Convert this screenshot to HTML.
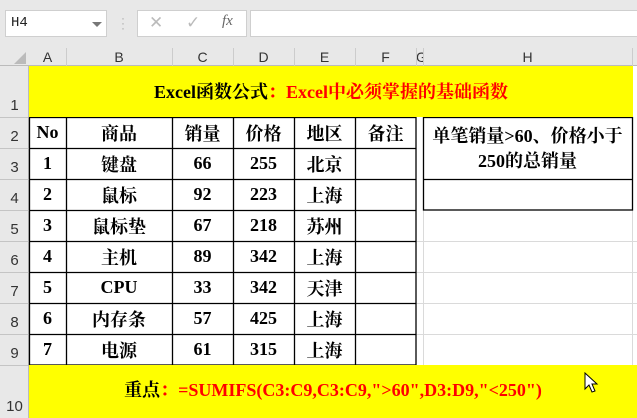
<!DOCTYPE html><html><head><meta charset="utf-8"><style>
*{margin:0;padding:0;box-sizing:border-box}
body{width:637px;height:418px;overflow:hidden;background:#fff;position:relative;font-family:"Liberation Serif","Noto Serif CJK SC",serif}
.a{position:absolute}
.hd{font-family:"Liberation Sans",sans-serif;font-size:14px;color:#333;text-align:center}
.c{position:absolute;display:flex;align-items:center;justify-content:center;font-weight:bold;font-size:18px;color:#000}
</style></head><body>
<div class="a" style="left:0;top:0;width:637px;height:66px;background:#e8e8e8"></div>
<div class="a" style="left:5px;top:10px;width:102px;height:27px;background:#fff;border:1px solid #cfcfcf"></div>
<div class="a hd" style="left:11px;top:15px;font-size:14px;font-family:'Liberation Mono',monospace;color:#222">H4</div>
<div class="a" style="left:92px;top:22px;width:0;height:0;border-left:5px solid transparent;border-right:5px solid transparent;border-top:5px solid #777"></div>
<div class="a" style="left:121px;top:16px;color:#aaa;font-size:12px;line-height:5px;font-family:'Liberation Sans'">·<br>·<br>·</div>
<div class="a" style="left:137px;top:10px;width:110px;height:27px;background:#fff;border:1px solid #cfcfcf"></div>
<div class="a" style="left:149px;top:13px;color:#bbb;font-size:17px;font-family:'DejaVu Sans'">✕</div>
<div class="a" style="left:186px;top:13px;color:#bbb;font-size:17px;font-family:'DejaVu Sans'">✓</div>
<div class="a" style="left:222px;top:13px;color:#666;font-size:15px;font-style:italic;font-family:'Liberation Serif'">fx</div>
<div class="a" style="left:250px;top:10px;width:390px;height:27px;background:#fff;border:1px solid #cfcfcf"></div>
<div class="a" style="left:0;top:48px;width:637px;height:18px;border-bottom:1px solid #bbb"></div>
<div class="a" style="left:14px;top:52px;width:0;height:0;border-left:12px solid transparent;border-bottom:12px solid #bbb"></div>
<div class="a hd" style="left:29px;top:49px;width:37px">A</div>
<div class="a hd" style="left:66px;top:49px;width:106px">B</div>
<div class="a hd" style="left:172px;top:49px;width:61px">C</div>
<div class="a hd" style="left:233px;top:49px;width:61px">D</div>
<div class="a hd" style="left:294px;top:49px;width:61px">E</div>
<div class="a hd" style="left:355px;top:49px;width:61px">F</div>
<div class="a hd" style="left:416px;top:49px;width:7px;overflow:hidden">G</div>
<div class="a hd" style="left:423px;top:49px;width:209px">H</div>
<div class="a" style="left:66px;top:48px;width:1px;height:18px;background:#ccc"></div>
<div class="a" style="left:172px;top:48px;width:1px;height:18px;background:#ccc"></div>
<div class="a" style="left:233px;top:48px;width:1px;height:18px;background:#ccc"></div>
<div class="a" style="left:294px;top:48px;width:1px;height:18px;background:#ccc"></div>
<div class="a" style="left:355px;top:48px;width:1px;height:18px;background:#ccc"></div>
<div class="a" style="left:416px;top:48px;width:1px;height:18px;background:#ccc"></div>
<div class="a" style="left:423px;top:48px;width:1px;height:18px;background:#ccc"></div>
<div class="a" style="left:632px;top:48px;width:1px;height:18px;background:#ccc"></div>
<div class="a" style="left:0;top:66px;width:29px;height:352px;background:#e8e8e8;border-right:1px solid #bbb"></div>
<div id="rh"></div>
<svg class="a" style="left:0;top:0" width="637" height="418">
<g stroke="#dadada" stroke-width="1">
<line x1="423.5" y1="210" x2="423.5" y2="365"/><line x1="632.5" y1="117" x2="632.5" y2="365"/>
<line x1="416" y1="241.5" x2="637" y2="241.5"/><line x1="416" y1="272.5" x2="637" y2="272.5"/><line x1="416" y1="303.5" x2="637" y2="303.5"/><line x1="416" y1="334.5" x2="637" y2="334.5"/>
</g>
<g stroke="#c4c4c4"><line x1="0" y1="117.5" x2="29" y2="117.5"/><line x1="0" y1="148.5" x2="29" y2="148.5"/><line x1="0" y1="179.5" x2="29" y2="179.5"/><line x1="0" y1="210.5" x2="29" y2="210.5"/><line x1="0" y1="241.5" x2="29" y2="241.5"/><line x1="0" y1="272.5" x2="29" y2="272.5"/><line x1="0" y1="303.5" x2="29" y2="303.5"/><line x1="0" y1="334.5" x2="29" y2="334.5"/><line x1="0" y1="365.5" x2="29" y2="365.5"/></g>
<g stroke="#000" stroke-width="1.3">
<rect x="29.5" y="117.5" width="386.5" height="247.5" fill="none"/>
<line x1="66.5" y1="117" x2="66.5" y2="365"/><line x1="172.5" y1="117" x2="172.5" y2="365"/><line x1="233.5" y1="117" x2="233.5" y2="365"/><line x1="294.5" y1="117" x2="294.5" y2="365"/><line x1="355.5" y1="117" x2="355.5" y2="365"/>
<line x1="29" y1="148.5" x2="416" y2="148.5"/><line x1="29" y1="179.5" x2="416" y2="179.5"/><line x1="29" y1="210.5" x2="416" y2="210.5"/><line x1="29" y1="241.5" x2="416" y2="241.5"/><line x1="29" y1="272.5" x2="416" y2="272.5"/><line x1="29" y1="303.5" x2="416" y2="303.5"/><line x1="29" y1="334.5" x2="416" y2="334.5"/>
<rect x="423.5" y="117.5" width="209" height="92.5" fill="none"/><line x1="423" y1="179.5" x2="632" y2="179.5"/>
</g>
</svg>
<div class="a" style="left:29px;top:66px;width:604px;height:51px;background:#ff0"></div>
<div class="c" style="left:29px;top:76px;width:604px;height:30px;font-size:18px">Excel函数公式<span style="color:#f00">：Excel中必须掌握的基础函数</span></div>
<div class="a" style="left:29px;top:365px;width:608px;height:53px;background:#ff0"></div>
<div class="c" style="left:29px;top:374px;width:608px;height:30px;font-size:18px">重点<span style="color:#f00">：=SUMIFS(C3:C9,C3:C9,"&gt;60",D3:D9,"&lt;250")</span></div>
<svg class="a" style="left:584px;top:372px" width="16" height="22"><path d="M1 1 L1 17 L5 13 L8 20 L11 19 L8 12 L13 12 Z" fill="#fff" stroke="#000" stroke-width="1"/></svg>
<div class="c" style="left:423px;top:118px;width:209px;height:62px;line-height:25px;text-align:center">单笔销量&gt;60、价格小于<br>250的总销量</div>
<script>
var rows=[["No","商品","销量","价格","地区","备注"],["1","键盘","66","255","北京",""],["2","鼠标","92","223","上海",""],["3","鼠标垫","67","218","苏州",""],["4","主机","89","342","上海",""],["5","CPU","33","342","天津",""],["6","内存条","57","425","上海",""],["7","电源","61","315","上海",""]];
var xs=[29,66,172,233,294,355,416],h="";
rows.forEach(function(r,i){r.forEach(function(t,j){h+='<div class="c" style="left:'+xs[j]+'px;top:'+(117+31*i)+'px;width:'+(xs[j+1]-xs[j])+'px;height:31px">'+t+'</div>';});});
var ry=[66,117,148,179,210,241,272,303,334,365,418];
for(var k=0;k<10;k++){h+='<div class="a hd" style="left:0;width:29px;top:'+(ry[k+1]-20)+'px;font-size:15px">'+(k+1)+'</div>';}
document.getElementById("rh").outerHTML=h;
</script>
</body></html>
